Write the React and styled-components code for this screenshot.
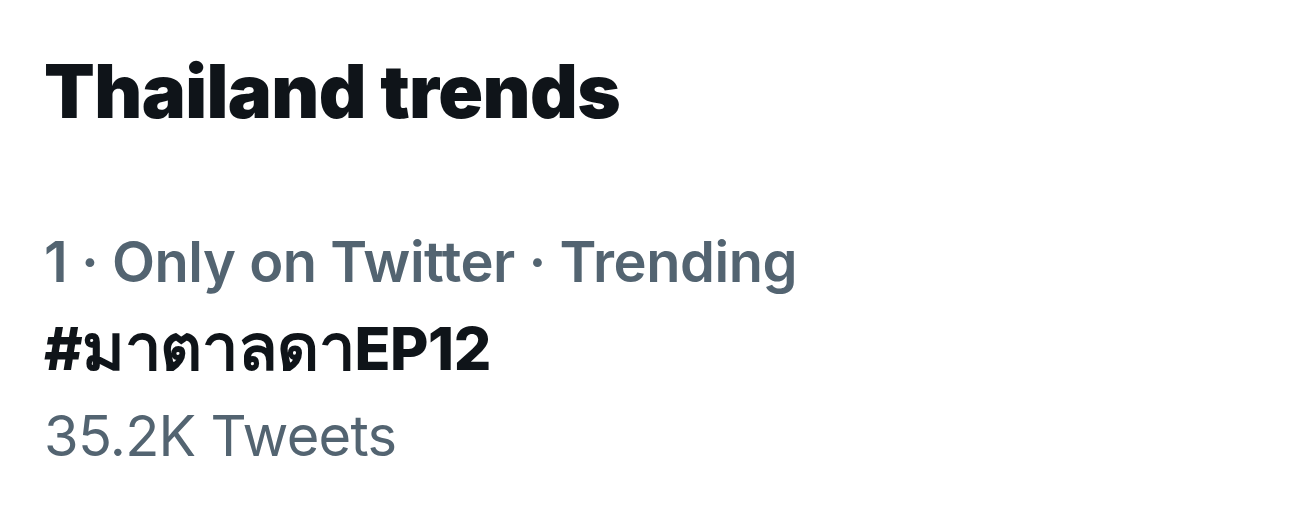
import React from 'react';
import styled, { createGlobalStyle } from 'styled-components';

const GlobalStyle = createGlobalStyle`
  html, body {
    margin: 0;
    padding: 0;
    background: #ffffff;
  }
  body {
    font-family: Inter, "Noto Sans", "DejaVu Sans", sans-serif;
    -webkit-font-smoothing: antialiased;
  }
`;

const Panel = styled.div`
  width: 1300px;
  height: 509px;
  box-sizing: border-box;
  padding: 46px 0 0 44px;
  background: #ffffff;
  overflow: hidden;
`;

const Title = styled.h2`
  margin: 0;
  font-size: 74px;
  font-weight: 900;
  line-height: 90px;
  color: #0f1419;
  letter-spacing: -0.6px;
`;

const Trend = styled.div`
  display: flex;
  flex-direction: column;
  margin-top: 82px;
`;

const Meta = styled.div`
  font-size: 56px;
  font-weight: ${(p) => p.weight || 400};
  letter-spacing: ${(p) => p.spacing || 0}px;
  line-height: 88px;
  color: #536471;
`;

const Tag = styled.div`
  font-size: 59px;
  font-weight: 800;
  line-height: 86px;
  color: #0f1419;
  letter-spacing: -0.4px;
`;

const Thai = styled.span`
  font-size: 1.1em;
  line-height: 0;
`;

export default function App() {
  return (
    <>
      <GlobalStyle />
      <Panel>
        <Title>Thailand trends</Title>
        <Trend>
          <Meta weight={600} spacing={-0.45}>1 · Only on Twitter · Trending</Meta>
          <Tag>#<Thai>มาตาลดา</Thai>EP12</Tag>
          <Meta spacing={-0.7}>35.2K Tweets</Meta>
        </Trend>
      </Panel>
    </>
  );
}
